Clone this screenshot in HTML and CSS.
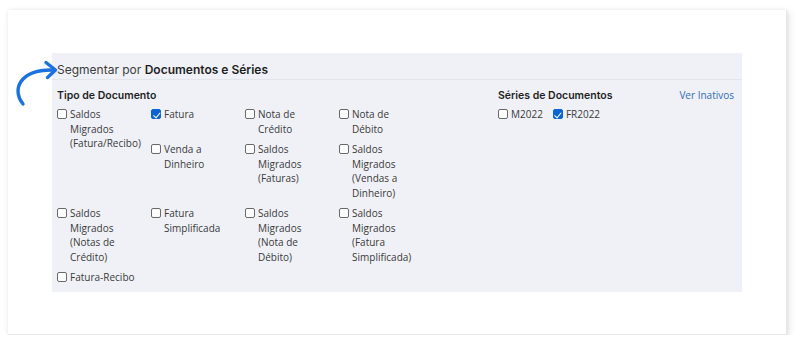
FILE: index.html
```html
<!DOCTYPE html>
<html lang="pt">
<head>
    <meta charset="UTF-8">
    <meta name="viewport" content="width=device-width, initial-scale=1.0">
    <title>Segmentar por Documentos e Séries</title>
    <link rel="stylesheet" href="styles.css">
</head>
<body>
    <div class="card">
        <!-- Annotation arrow -->
        <svg class="hint-arrow" width="52" height="54" viewBox="0 0 52 54">
            <path d="M13 49 C 2 36, 8 14, 44 15" fill="none" stroke="#1a72e0" stroke-width="3.4" stroke-linecap="round"/>
            <path d="M36 7.5 L 45.5 15 L 37.5 22.5" fill="none" stroke="#1a72e0" stroke-width="3.4" stroke-linecap="round" stroke-linejoin="round"/>
        </svg>

        <div class="panel">
            <div class="panel-header">
                Segmentar por <strong>Documentos e Séries</strong>
            </div>

            <div class="panel-body">
                <!-- Tipo de Documento -->
                <div class="doc-types">
                    <h3 class="section-title">Tipo de Documento</h3>
                    <div class="check-grid">
                        <label class="check span-2"><span class="box"></span><span>Saldos Migrados (Fatura/Recibo)</span></label>
                        <label class="check"><span class="box checked"></span><span>Fatura</span></label>
                        <label class="check"><span class="box"></span><span>Nota de Crédito</span></label>
                        <label class="check"><span class="box"></span><span>Nota de Débito</span></label>
                        <label class="check"><span class="box"></span><span>Venda a Dinheiro</span></label>
                        <label class="check"><span class="box"></span><span>Saldos Migrados (Faturas)</span></label>
                        <label class="check"><span class="box"></span><span>Saldos Migrados (Vendas a Dinheiro)</span></label>
                        <label class="check"><span class="box"></span><span>Saldos Migrados (Notas de Crédito)</span></label>
                        <label class="check"><span class="box"></span><span>Fatura Simplificada</span></label>
                        <label class="check"><span class="box"></span><span>Saldos Migrados (Nota de Débito)</span></label>
                        <label class="check"><span class="box"></span><span>Saldos Migrados (Fatura Simplificada)</span></label>
                        <label class="check"><span class="box"></span><span>Fatura-Recibo</span></label>
                    </div>
                </div>

                <!-- Séries de Documentos -->
                <div class="series">
                    <div class="series-head">
                        <h3 class="section-title">Séries de Documentos</h3>
                        <a href="#" class="link">Ver Inativos</a>
                    </div>
                    <div class="series-list">
                        <label class="check"><span class="box"></span><span>M2022</span></label>
                        <label class="check"><span class="box checked"></span><span>FR2022</span></label>
                    </div>
                </div>
            </div>
        </div>
    </div>
</body>
</html>
```

FILE: styles.css
```css
* {
    margin: 0;
    padding: 0;
    box-sizing: border-box;
}

body {
    font-family: 'Open Sans', 'Noto Sans', sans-serif;
    background: #ffffff;
    color: #3a3a3a;
}

.card {
    position: relative;
    margin: 10px 13px 0 8px;
    height: 325px;
    padding: 43px 44px 0 44px;
    background: #ffffff;
    border-right: 1px solid #e6e8eb;
    border-bottom: 1px solid #e6e8eb;
    box-shadow: 2px 2px 7px rgba(0, 0, 0, 0.12), 0 0 3px rgba(0, 0, 0, 0.05);
}

.hint-arrow {
    position: absolute;
    left: 2px;
    top: 45px;
}

.panel {
    background: #f0f1f7;
    height: 239px;
}

.panel-header {
    height: 27px;
    padding: 0 5px;
    line-height: 34px;
    font-family: 'Inter', sans-serif;
    font-size: 12px;
    color: #3c3c3c;
    border-bottom: 1px solid #e3e5ec;
}

.panel-header strong {
    font-weight: 600;
    color: #1f1f1f;
}

.panel-body {
    display: grid;
    grid-template-columns: 441px 1fr;
    padding: 8px 5px 7px 5px;
}

.section-title {
    font-family: 'Inter', sans-serif;
    font-size: 10.5px;
    font-weight: 600;
    color: #1f1f1f;
    line-height: 15px;
    margin-bottom: 4px;
}

.check-grid {
    display: grid;
    grid-template-columns: repeat(4, 94px);
    row-gap: 6px;
}

.check {
    display: flex;
    align-items: flex-start;
    gap: 3px;
    font-size: 10px;
    line-height: 14.5px;
    color: #3a3a3a;
    padding-right: 14px;
}

.span-2 {
    grid-row: span 2;
}

.box {
    flex: none;
    width: 10px;
    height: 10px;
    margin-top: 2px;
    border: 1px solid #6a6a6a;
    border-radius: 2px;
    background: #ffffff;
    position: relative;
}

.box.checked {
    background: #0b63d6;
    border-color: #0b63d6;
}

.box.checked::after {
    content: '';
    position: absolute;
    left: 2.5px;
    top: 0.5px;
    width: 3px;
    height: 5.5px;
    border: solid #ffffff;
    border-width: 0 1.6px 1.6px 0;
    transform: rotate(40deg);
}

.series-head {
    display: flex;
    justify-content: space-between;
    align-items: flex-start;
}

.link {
    font-size: 10px;
    line-height: 15px;
    color: #2e6cb8;
    text-decoration: none;
    margin-right: 3px;
}

.series-list {
    display: flex;
    gap: 10px;
}

.series-list .check {
    padding-right: 0;
}
```
